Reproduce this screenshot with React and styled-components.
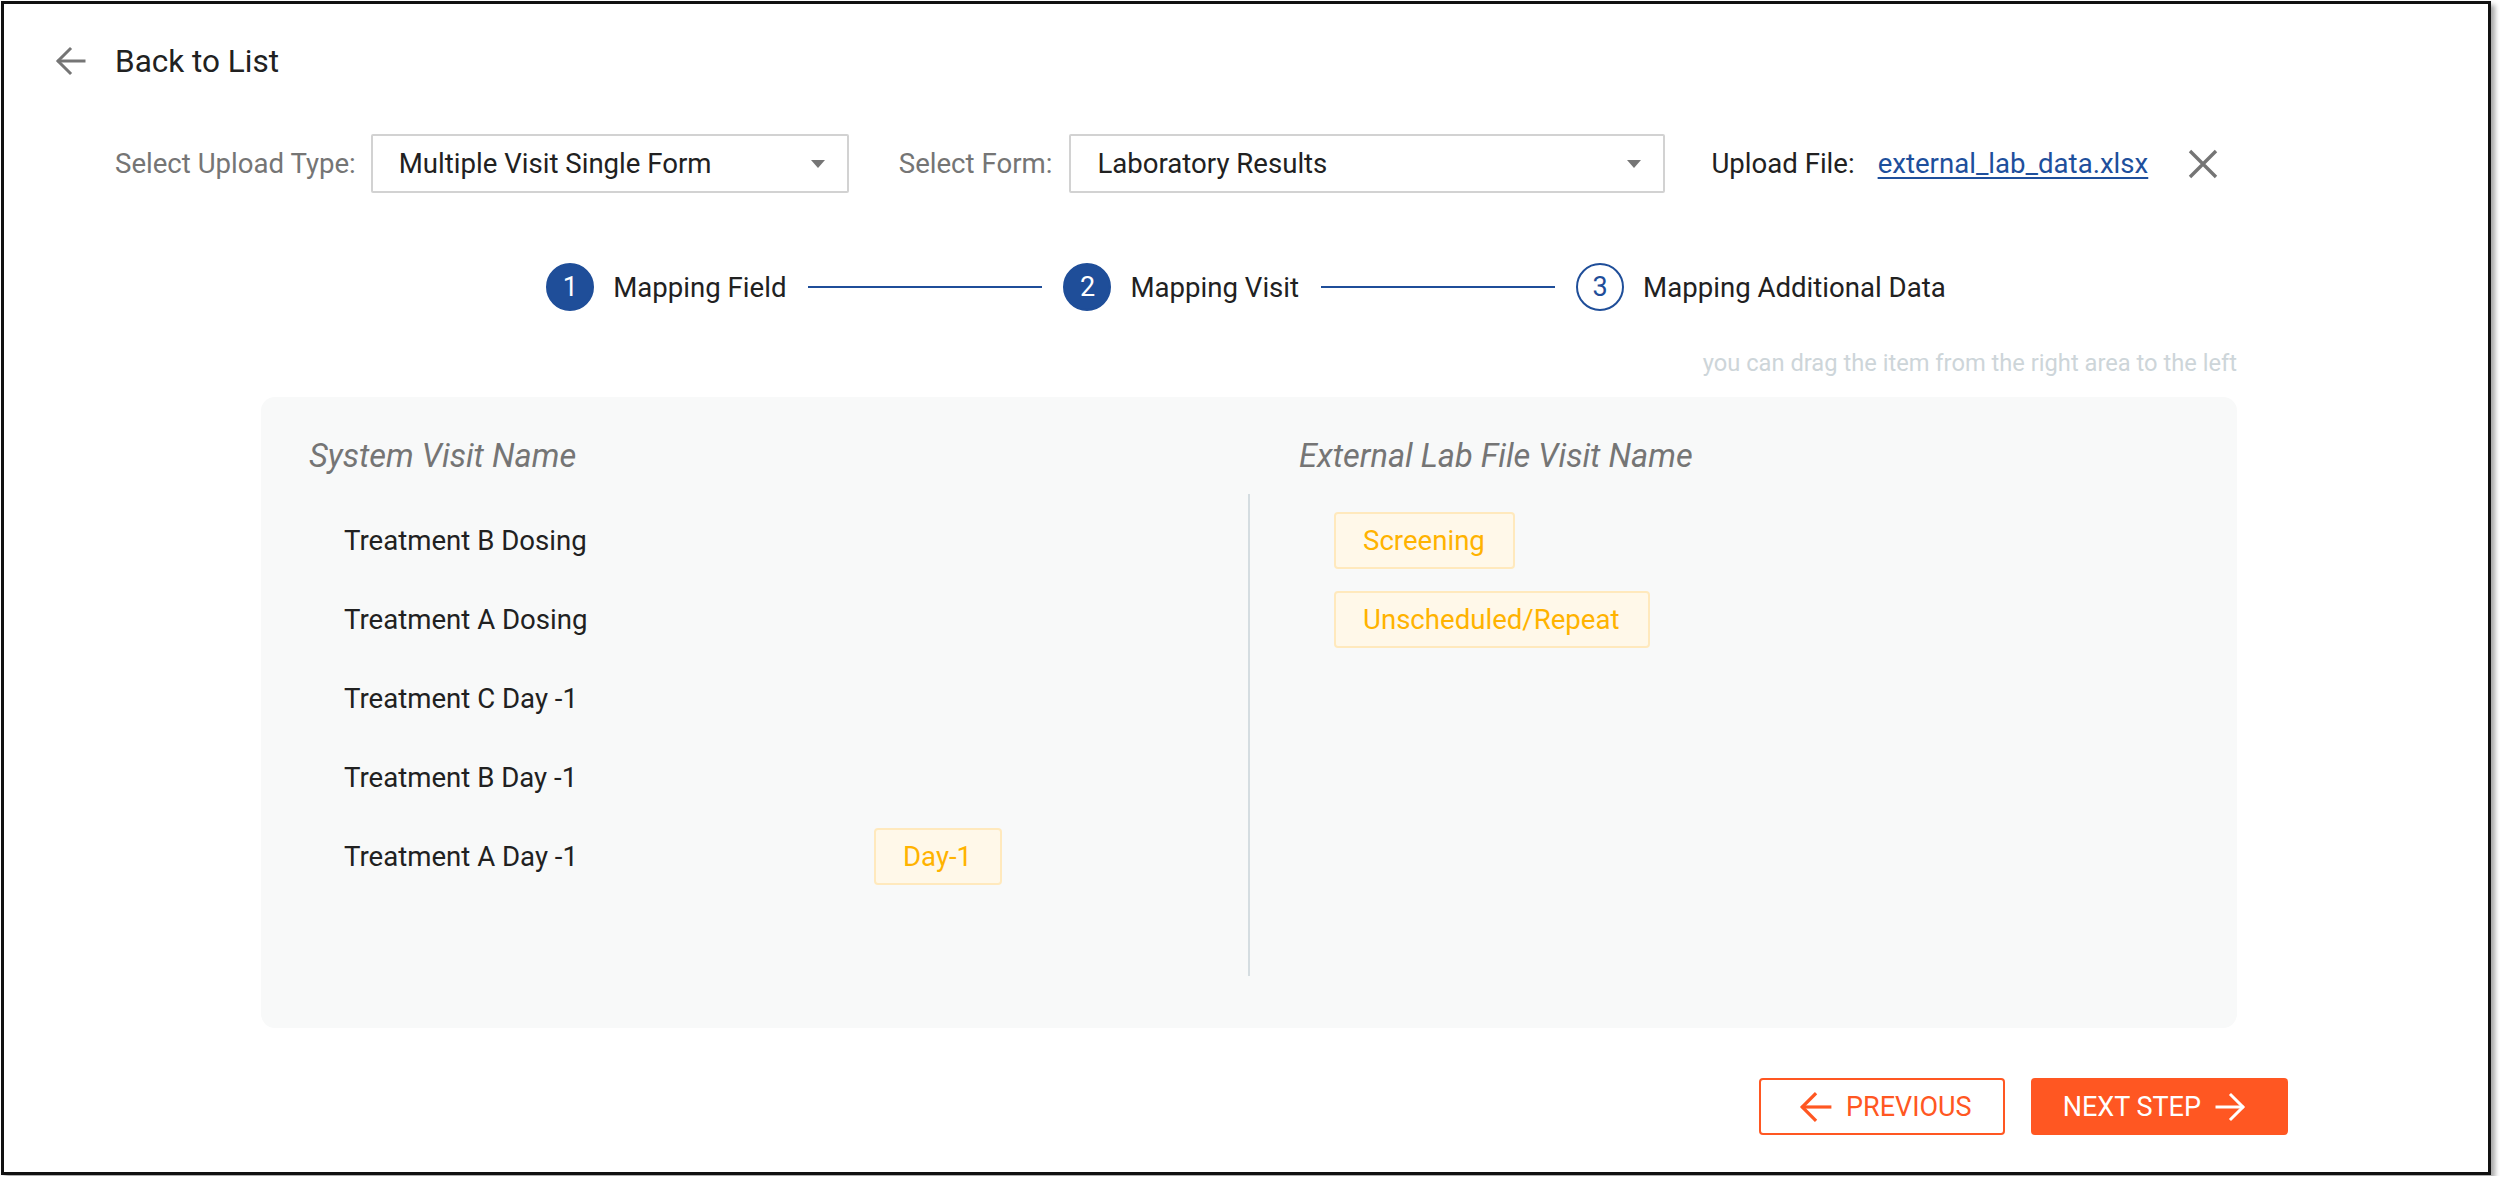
import React from 'react'
import styled, { createGlobalStyle } from 'styled-components'

const GlobalStyle = createGlobalStyle`
  * {
    box-sizing: border-box;
  }
  body {
    margin: 0;
    background: #fff;
    font-family: Roboto, "Liberation Sans", sans-serif;
    color: #212121;
  }
`

const BLUE = '#1f4e99'
const ORANGE = '#ff5722'
const GREY = '#757575'
const TEXT = '27.6px'

const Frame = styled.div`
  width: 2490px;
  height: 1174px;
  margin: 1px;
  border: 3px solid #111;
  background: #fff;
  box-shadow: 4px 4px 5px rgba(0, 0, 0, 0.35);
  padding-top: 37px;
`

const BackLink = styled.a`
  display: flex;
  align-items: center;
  gap: 28px;
  height: 40px;
  padding-left: 51px;
  font-size: 31.5px;
  color: #212121;
  text-decoration: none;
  cursor: pointer;
`

const Filters = styled.div`
  display: flex;
  align-items: center;
  height: 59px;
  margin-top: 53px;
  padding-left: 111px;
`

const FilterLabel = styled.span`
  font-size: ${TEXT};
  color: ${p => (p.$dark ? '#212121' : GREY)};
  margin-right: ${p => p.$gap || 15}px;
`

const Select = styled.div`
  display: flex;
  align-items: center;
  justify-content: space-between;
  width: ${p => p.$width}px;
  height: 59px;
  margin-right: ${p => p.$gap || 50}px;
  padding: 0 22px 0 26px;
  border: 2px solid #d2d2d2;
  border-radius: 2px;
  background: #fff;
  font-size: ${TEXT};
  color: #212121;
`

const Caret = styled.span`
  width: 0;
  height: 0;
  border-left: 7px solid transparent;
  border-right: 7px solid transparent;
  border-top: 8px solid ${GREY};
`

const FileLink = styled.a`
  font-size: ${TEXT};
  color: #1e4f9c;
  text-decoration: underline;
  text-underline-offset: 4px;
  margin-right: 40px;
`

const CloseButton = styled.button`
  display: flex;
  padding: 0;
  border: 0;
  background: none;
  cursor: pointer;
`

const Stepper = styled.div`
  display: flex;
  align-items: center;
  justify-content: center;
  height: 48px;
  margin-top: 70px;
`

const StepCircle = styled.span`
  display: flex;
  align-items: center;
  justify-content: center;
  width: 48px;
  height: 48px;
  border-radius: 50%;
  border: 2px solid ${BLUE};
  background: ${p => (p.$done ? BLUE : '#fff')};
  color: ${p => (p.$done ? '#fff' : BLUE)};
  font-size: 27px;
`

const StepLabel = styled.span`
  margin-left: 19px;
  font-size: ${TEXT};
  color: #212121;
`

const StepLine = styled.span`
  width: 234px;
  height: 2px;
  margin: 0 21px 0 22px;
  background: ${BLUE};
`

const Hint = styled.div`
  width: 1976px;
  margin: 37px 0 0 257px;
  text-align: right;
  font-size: 23.7px;
  line-height: 30px;
  color: #cdd5d9;
`

const Panel = styled.div`
  display: grid;
  grid-template-columns: 987px 1fr;
  grid-template-rows: 38px 482px;
  row-gap: 19px;
  width: 1976px;
  margin: 19px 0 0 257px;
  padding: 40px 0 52px;
  border-radius: 14px;
  background: #f8f9f9;
`

const ColumnTitle = styled.div`
  padding-left: ${p => p.$indent}px;
  font-size: 32.6px;
  font-style: italic;
  line-height: 38px;
  color: ${GREY};
`

const VisitList = styled.div`
  display: flex;
  flex-direction: column;
  align-items: flex-start;
  gap: 22px;
  padding: 18px 0 0 ${p => p.$indent}px;
  border-left: ${p => (p.$divided ? '2px solid #d5dde1' : 'none')};
`

const VisitRow = styled.div`
  display: grid;
  grid-template-columns: 530px auto;
  align-items: center;
  min-height: 57px;
  font-size: ${TEXT};
  color: #212121;
`

const Chip = styled.span`
  display: inline-flex;
  align-items: center;
  height: 57px;
  padding: 0 28px 0 27px;
  border: 2px solid #ffe9bd;
  border-radius: 4px;
  background: #fff8e9;
  color: #ffb300;
  font-size: ${TEXT};
  cursor: grab;
`

const Footer = styled.div`
  display: flex;
  justify-content: flex-end;
  gap: 26px;
  margin-top: 50px;
  padding-right: 200px;
`

const StepButton = styled.button`
  display: flex;
  align-items: center;
  gap: 13px;
  height: 57px;
  padding: ${p => (p.$primary ? '0 40px 0 30px' : '0 31px 0 38px')};
  border: 2px solid ${ORANGE};
  border-radius: 4px;
  background: ${p => (p.$primary ? ORANGE : '#fff')};
  color: ${p => (p.$primary ? '#fff' : ORANGE)};
  font-family: inherit;
  font-size: 27px;
  text-transform: uppercase;
  cursor: pointer;
`

const Arrow = ({ dir = 'left', size = 32, color = GREY, width = 3 }) => (
  <svg
    width={size}
    height={size}
    viewBox="0 0 32 32"
    fill="none"
    stroke={color}
    strokeWidth={width}
    strokeLinecap="square"
    style={dir === 'right' ? { transform: 'scaleX(-1)' } : undefined}
  >
    <path d="M29 16H4" />
    <path d="M15 4L3 16L15 28" />
  </svg>
)

const CloseIcon = () => (
  <svg width="30" height="30" viewBox="0 0 30 30" stroke={GREY} strokeWidth="3.4">
    <path d="M2 2L28 28M28 2L2 28" />
  </svg>
)

const steps = [
  { n: 1, label: 'Mapping Field', done: true },
  { n: 2, label: 'Mapping Visit', done: true },
  { n: 3, label: 'Mapping Additional Data', done: false }
]

const systemVisits = [
  { name: 'Treatment B Dosing' },
  { name: 'Treatment A Dosing' },
  { name: 'Treatment C Day -1' },
  { name: 'Treatment B Day -1' },
  { name: 'Treatment A Day -1', mapped: 'Day-1' }
]

const fileVisits = ['Screening', 'Unscheduled/Repeat']

const App = () => {
  return (
    <>
      <GlobalStyle />
      <Frame>
        <BackLink>
          <Arrow />
          Back to List
        </BackLink>

        <Filters>
          <FilterLabel>Select Upload Type:</FilterLabel>
          <Select $width={478}>
            Multiple Visit Single Form
            <Caret />
          </Select>
          <FilterLabel $gap={17}>Select Form:</FilterLabel>
          <Select $width={596} $gap={46}>
            Laboratory Results
            <Caret />
          </Select>
          <FilterLabel $dark $gap={23}>Upload File:</FilterLabel>
          <FileLink>external_lab_data.xlsx</FileLink>
          <CloseButton>
            <CloseIcon />
          </CloseButton>
        </Filters>

        <Stepper>
          {steps.map((step, i) => (
            <React.Fragment key={step.n}>
              <StepCircle $done={step.done}>{step.n}</StepCircle>
              <StepLabel>{step.label}</StepLabel>
              {i < steps.length - 1 && <StepLine />}
            </React.Fragment>
          ))}
        </Stepper>

        <Hint>you can drag the item from the right area to the left</Hint>

        <Panel>
          <ColumnTitle $indent={48}>System Visit Name</ColumnTitle>
          <ColumnTitle $indent={51}>External Lab File Visit Name</ColumnTitle>
          <VisitList $indent={83}>
            {systemVisits.map(visit => (
              <VisitRow key={visit.name}>
                <span>{visit.name}</span>
                {visit.mapped && <Chip>{visit.mapped}</Chip>}
              </VisitRow>
            ))}
          </VisitList>
          <VisitList $indent={84} $divided>
            {fileVisits.map(name => (
              <Chip key={name}>{name}</Chip>
            ))}
          </VisitList>
        </Panel>

        <Footer>
          <StepButton>
            <Arrow color={ORANGE} size={34} />
            Previous
          </StepButton>
          <StepButton $primary>
            Next Step
            <Arrow dir="right" color="#fff" size={32} />
          </StepButton>
        </Footer>
      </Frame>
    </>
  )
}

export default App
